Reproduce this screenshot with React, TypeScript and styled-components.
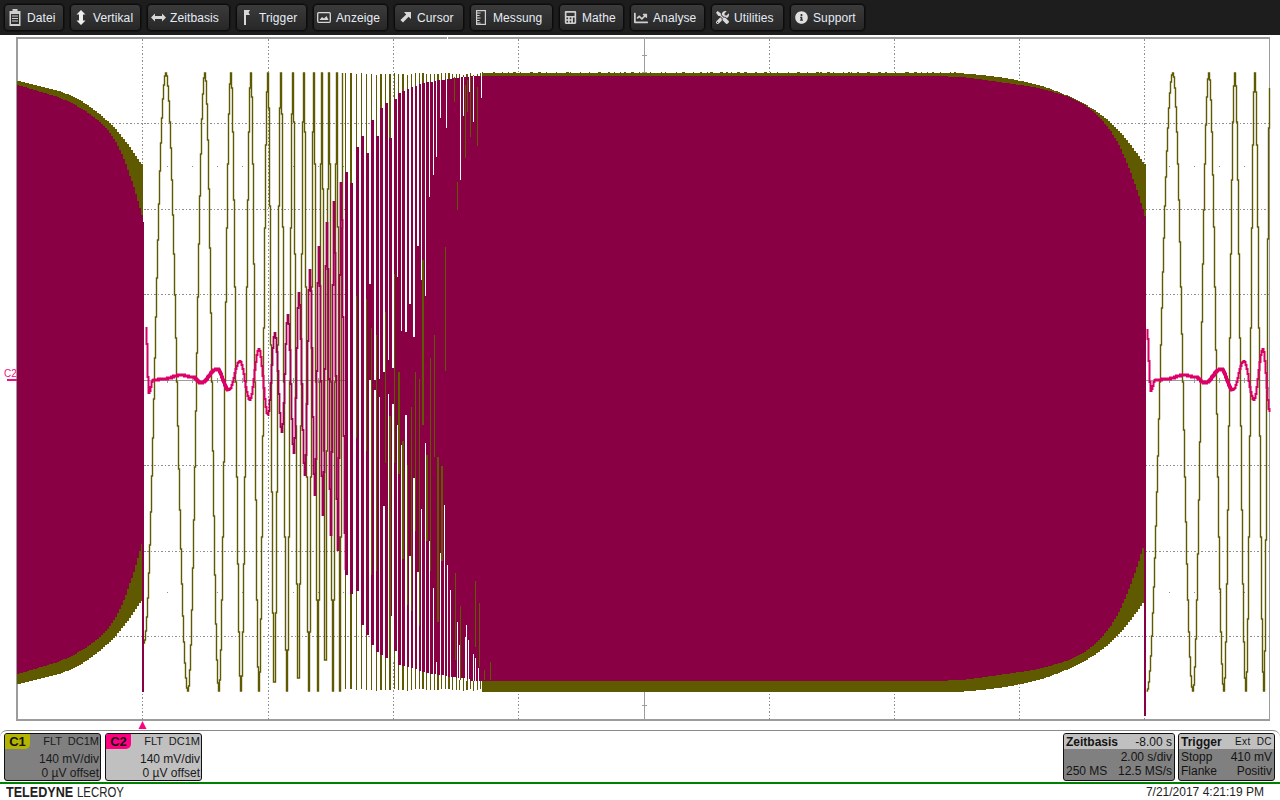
import { ReactNode } from "react";
import styled, { createGlobalStyle } from "styled-components";
import { FaTools, FaInfoCircle, FaCalculator, FaChartLine } from "react-icons/fa";

const GlobalStyle = createGlobalStyle`
  html, body {
    margin: 0;
    padding: 0;
    background: #fff;
    font-family: "Liberation Sans", Arial, sans-serif;
  }
`;

const Screen = styled.div`
  width: 1280px;
  height: 800px;
  display: flex;
  flex-direction: column;
  overflow: hidden;
  background: #fff;
`;

const Toolbar = styled.div`
  height: 35px;
  flex: none;
  box-sizing: border-box;
  display: flex;
  align-items: flex-start;
  gap: 6px;
  padding: 4px 0 0 4px;
  background: #1d1d1d;
`;

const MenuButton = styled.div<{ $w: number }>`
  width: ${(p) => p.$w}px;
  height: 27px;
  box-sizing: border-box;
  display: flex;
  align-items: center;
  border-radius: 4px;
  border: 1px solid #0c0c0c;
  outline: 1px solid #141414;
  background: linear-gradient(#3b3b3b, #272727);
  color: #e6ecf6;
  font-size: 12px;
  letter-spacing: 0.1px;
  white-space: nowrap;
`;

const IconSlot = styled.span`
  width: 20px;
  padding-right: 2px;
  flex: none;
  display: flex;
  justify-content: center;
  svg {
    display: block;
  }
`;

const ScopeArea = styled.div`
  position: relative;
  height: 695px;
  flex: none;
`;

const Traces = styled.svg`
  display: block;
`;

const OffsetLabel = styled.div`
  position: absolute;
  left: 4px;
  top: 333px;
  font-size: 10px;
  line-height: 11px;
  color: #f0107c;
  &::after {
    content: "";
    position: absolute;
    left: 3px;
    top: 11px;
    width: 10px;
    height: 2px;
    background: #f0107c;
  }
`;

const DescriptorBar = styled.div`
  height: 52px;
  flex: none;
  box-sizing: border-box;
  display: flex;
  justify-content: space-between;
  padding: 2px 5px 0 4px;
  border-top: 1px solid #8a8a8a;
  border-radius: 7px 7px 0 0;
`;

const CardGroup = styled.div<{ $gap: number }>`
  display: flex;
  gap: ${(p) => p.$gap}px;
`;

const ChannelCard = styled.div<{ $shade: string }>`
  width: 97px;
  height: 48px;
  box-sizing: border-box;
  border: 1px solid #111;
  border-radius: 3px;
  background: ${(p) => p.$shade};
  color: #1a1a1a;
  font-size: 12px;
  line-height: 13px;
  text-align: right;
  overflow: hidden;
`;

const ChannelHead = styled.div`
  display: flex;
  justify-content: space-between;
  height: 18px;
  font-size: 11px;
  line-height: 14px;
  padding-right: 1px;
  word-spacing: 3px;
`;

const ChannelBadge = styled.span<{ $color: string }>`
  width: 25px;
  height: 15px;
  background: ${(p) => p.$color};
  border-radius: 0 0 5px 0;
  font-size: 13px;
  font-weight: bold;
  line-height: 15px;
  text-align: center;
  color: #111;
`;

const CardLine = styled.div`
  height: 14px;
  line-height: 14px;
  padding-right: 1px;
  white-space: nowrap;
`;

const InfoCard = styled.div<{ $w: number }>`
  width: ${(p) => p.$w}px;
  height: 48px;
  box-sizing: border-box;
  border: 1px solid #111;
  border-radius: 3px;
  background: #808080;
  color: #141414;
  font-size: 12px;
  overflow: hidden;
`;

const InfoHead = styled.div`
  height: 15px;
  display: flex;
  justify-content: space-between;
  align-items: center;
  padding: 0 2px;
  background: #c0c0c0;
`;

const InfoRow = styled.div`
  height: 14px;
  margin-top: 1px;
  line-height: 14px;
  display: flex;
  justify-content: space-between;
  padding: 0 2px;
  white-space: nowrap;
  & + & {
    margin-top: 0;
  }
`;

const SmallTags = styled.span`
  font-size: 10px;
  letter-spacing: 0.4px;
  word-spacing: 3px;
`;

const Footer = styled.div`
  flex: 1;
  display: flex;
  align-items: center;
  justify-content: space-between;
  box-sizing: border-box;
  padding: 0 16px 0 6px;
  border-top: 2px solid #008000;
`;

const Logo = styled.div`
  display: flex;
  font-size: 15px;
  line-height: 16px;
  color: #222;
`;

const LogoPart = styled.span<{ $w: number; $scale: number }>`
  display: inline-block;
  width: ${(p) => p.$w}px;
  transform: scaleX(${(p) => p.$scale});
  transform-origin: left center;
  white-space: nowrap;
`;

const Stamp = styled.div`
  font-size: 12px;
  color: #222;
`;

const OLIVE = "#5f5a00";
const MAROON = "#8a0044";

const ClipboardIcon = () => (
  <svg width="12" height="17" viewBox="0 0 12 17" fill="#cfcfcf">
    <path d="M3.5 0h5v2h3v15H.5V2h3zM2 5v10h8V5z" fillRule="evenodd" />
    <path d="M3 6.5h6v1H3zM3 9h6v1H3zM3 11.5h6v1H3z" />
  </svg>
);

const UpDownIcon = () => (
  <svg width="10" height="15" viewBox="0 0 10 15" fill="#eeeeee">
    <path d="M5 0l4.5 4.5H7v6h2.5L5 15 .5 10.5H3v-6H.5z" />
  </svg>
);

const LeftRightIcon = () => (
  <svg width="15" height="9" viewBox="0 0 15 9" fill="#d8d8d8">
    <path d="M0 4.5L4 .5V3h7V.5l4 4-4 4V6H4v2.5z" />
  </svg>
);

const FlagIcon = () => (
  <svg width="7" height="15" viewBox="0 0 7 15" fill="#d8d8d8">
    <path d="M0 0h2v15H0zM2 0h4L4.6 2.5 6 5H2z" />
  </svg>
);

const DisplayIcon = () => (
  <svg width="14" height="11" viewBox="0 0 14 11" fill="none" stroke="#d8d8d8" strokeWidth="1.3">
    <rect x=".7" y=".7" width="12.6" height="9.6" rx="1" />
    <path d="M2.5 8l2.5-3 2 1.5L9.5 4l2 4z" fill="#d8d8d8" stroke="none" />
  </svg>
);

const CursorIcon = () => (
  <svg width="11" height="11" viewBox="0 0 11 11" fill="#d8d8d8">
    <path d="M11 0v7L8.6 4.8 3 10.6.4 8l5.8-5.6L4 0z" />
  </svg>
);

const RulerIcon = () => (
  <svg width="10" height="15" viewBox="0 0 10 15" fill="none" stroke="#d0d0d0" strokeWidth="1.2">
    <rect x=".6" y=".6" width="8.8" height="13.8" />
    <path d="M.6 3h4M.6 5.5h3M.6 8h4M.6 10.5h3M.6 13h4" strokeWidth="1" />
  </svg>
);

const menu: { label: string; w: number; icon: ReactNode }[] = [
  { label: "Datei", w: 60, icon: <ClipboardIcon /> },
  { label: "Vertikal", w: 71, icon: <UpDownIcon /> },
  { label: "Zeitbasis", w: 83, icon: <LeftRightIcon /> },
  { label: "Trigger", w: 71, icon: <FlagIcon /> },
  { label: "Anzeige", w: 75, icon: <DisplayIcon /> },
  { label: "Cursor", w: 70, icon: <CursorIcon /> },
  { label: "Messung", w: 83, icon: <RulerIcon /> },
  { label: "Mathe", w: 65, icon: <FaCalculator size={13} color="#cfcfcf" /> },
  { label: "Analyse", w: 75, icon: <FaChartLine size={14} color="#cfcfcf" /> },
  { label: "Utilities", w: 73, icon: <FaTools size={13} color="#d8d8d8" /> },
  { label: "Support", w: 75, icon: <FaInfoCircle size={13} color="#e0e0e0" /> },
];

type Table = [number, number][];

const lerp = (t: Table, x: number) => {
  if (x <= t[0][0]) return t[0][1];
  for (let i = 1; i < t.length; i++) {
    if (x <= t[i][0]) {
      const k = (x - t[i - 1][0]) / (t[i][0] - t[i - 1][0]);
      return t[i - 1][1] + k * (t[i][1] - t[i - 1][1]);
    }
  }
  return t[t.length - 1][1];
};

// rounds off the knees of a table, less so close to its ends
const smooth = (t: Table, x: number) => {
  const r = Math.max(0, Math.min(14, x - t[0][0], t[t.length - 1][0] - x));
  let sum = 0;
  for (let i = -4; i <= 4; i++) sum += lerp(t, x + (i / 4) * r);
  return sum / 9;
};

// one pen stroke through peaks and troughs, stepped per pixel column like the scope draws it
const stepped = (pts: Table) => {
  let d = `M${pts[0][0] + 0.5} ${pts[0][1]}`;
  for (let i = 1; i < pts.length; i++) {
    const [x0, y0] = pts[i - 1];
    const [x1, y1] = pts[i];
    for (let x = Math.floor(x0) + 1; x <= x1; x++) {
      const k = (x - x0) / (x1 - x0);
      const y = y0 + ((1 - Math.cos(Math.PI * k)) / 2) * (y1 - y0);
      d += `H${x + 0.5}V${Math.round(y)}`;
    }
  }
  return d;
};

const box = (x: number, y: number, w: number, h: number) =>
  `M${x.toFixed(1)} ${y.toFixed(1)}h${w.toFixed(1)}v${h.toFixed(1)}h${(-w).toFixed(1)}z`;

const alternate = (xs: number[], first: number, second: number): Table =>
  xs.map((x, i) => [x, i % 2 === 0 ? first : second]);

const oliveLeft: Table = [
  [143, 643],
  ...alternate(
    [165, 187, 204, 218, 230, 240, 250, 258, 267, 273.5, 280, 286, 292, 297.5, 303, 308, 313, 317, 321, 324.5, 328, 332, 336, 339, 342],
    73,
    691
  ),
];

const oliveRight: Table = [
  [1146, 691],
  ...alternate([1172, 1192, 1208, 1223, 1234, 1245, 1254, 1263], 73, 691),
  [1269, 88],
];

const pinkFlatLeft: Table = [
  [152, 380], [163, 379], [180, 375], [192, 377], [200, 383], [216, 369], [228, 390],
];

const pinkLeft: Table = [
  [145, 328], [148, 393], [152, 380], [163, 379], [180, 375], [192, 377], [200, 383],
  [216, 369], [228, 390], [239, 361], [249, 400], [258, 349], [267, 415],
];

const maroonLeft: Table = [
  [267, 415], [274, 333], [281, 432], [287, 315], [293, 453], [298, 293], [304, 475], [309, 270],
  [314, 495], [318, 247], [322, 515], [326, 223], [330, 535], [333, 202], [337, 550], [340, 183], [345, 570],
];

const pinkFlatRight: Table = [
  [1154, 380], [1166, 379], [1183, 375], [1195, 377], [1204, 383], [1220, 369], [1232, 390],
];

const pinkRight: Table = [
  [1146, 330], [1150, 391], [1154, 380], [1166, 379], [1183, 375], [1195, 377], [1204, 383],
  [1220, 369], [1232, 390], [1243, 361], [1253, 400], [1262, 349], [1269, 412],
];

const periods: Table = [[345, 5.4], [380, 4.6], [420, 3.8], [482, 3.4]];
const slitWidth: Table = [[345, 2.4], [380, 1.7], [410, 1.2], [445, 1]];
const solidMiddle: Table = [[345, 0], [375, 0], [400, 50], [425, 130], [445, 230]];
const bandTop: Table = [[345, 172], [350, 160], [360, 137], [373, 117], [390, 97], [420, 83], [440, 80], [460, 77], [482, 76]];
const bandBottom: Table = [[345, 575], [350, 593], [360, 623], [373, 650], [393, 663], [427, 673], [450, 677], [482, 680]];

const oliveHalf: Table = [
  [17, 301], [70, 288], [100, 268], [125, 243], [135, 225], [143, 215],
];
const maroonHalf: Table = [
  [17, 294], [67, 279], [100, 258], [117, 239], [128, 211], [135, 186], [143, 156],
];
const oliveHalfRight: Table = [
  [470, 309], [960, 309], [1000, 305], [1040, 297], [1080, 281], [1107, 263], [1125, 245], [1138, 225], [1146, 215],
];
const maroonHalfRight: Table = [
  [470, 302], [960, 301.5], [1040, 290], [1080, 277], [1100, 261], [1120, 234], [1130, 208], [1138, 181], [1146, 156],
];

// hand picked slits and olive fragments from the end of the sweep
const lateSlits: number[][] = [
  [481, 76, 98], [473, 76, 122], [460, 76, 180], [469, 76, 92], [457, 622, 681], [475, 658, 681],
  [465, 637, 681], [468, 640, 681], [450, 590, 681], [478, 668, 681], [446, 76, 128],
];
const lateOlive: number[][] = [
  [455, 573, 660], [475, 581, 647], [479, 603, 667], [460, 606, 680], [465, 85, 158], [467, 80, 112],
  [470, 77, 137], [477, 87, 146], [454, 77, 102], [457, 182, 210], [484, 670, 680], [490, 662, 680],
];

const buildTraces = () => {
  let seed = 4711;
  const rnd = () => {
    seed = (seed * 16807) % 2147483647;
    return seed / 2147483647;
  };

  let oliveBars = "";
  let maroonBars = "";
  let slits = "";
  let oliveOver = "";

  let x = 345;
  while (x < 482) {
    const p = lerp(periods, x);
    const top = lerp(bandTop, x);
    const bottom = lerp(bandBottom, x);
    const slit = lerp(slitWidth, x);
    oliveBars += box(x, 73 + Math.round(rnd() * 2), 1.3, 616);
    if (x < 470) {
      const trimTop = x < 410 && rnd() < 0.4 ? rnd() * 70 : 0;
      const trimBottom = x < 410 && rnd() < 0.4 ? rnd() * 70 : 0;
      maroonBars += box(x, top + trimTop, p, bottom - top - trimTop - trimBottom);
    }
    if (x < 445) {
      // long slits from both band edges, the part left closed around the middle grows along the sweep
      const slitX = x + p - slit;
      const middle = lerp(solidMiddle, x);
      const upTo = 380 - middle * (0.4 + rnd()) - (rnd() < 0.2 ? rnd() * 120 : 0);
      const downFrom = 380 + middle * (0.4 + rnd()) + (rnd() < 0.2 ? rnd() * 120 : 0);
      slits += box(slitX, top, slit, upTo - top);
      slits += box(slitX, downFrom, slit, bottom - downFrom + 1);
      if (x > 352 && rnd() < lerp([[352, 0.45], [375, 0.85], [430, 0.8], [445, 0.4]], x)) {
        oliveOver += box(x, 220 + rnd() * 260, 1.5, 80 + rnd() * 170);
      }
    } else if (x < 480 && rnd() < 0.55) {
      // a few slits still cut in from the band edges
      const len = 12 + rnd() * 50;
      slits += rnd() < 0.4 ? box(x, top, 1, len) : box(x, bottom - len, 1, len + 2);
    }
    x += p;
  }

  lateSlits.forEach(([sx, a, b]) => {
    slits += box(sx, a, 1, b - a);
  });
  lateOlive.forEach(([sx, a, b]) => {
    oliveOver += box(sx, a, 1, b - a);
  });

  // filled sweep edges, a step every two columns
  const outline = (from: number, to: number, half: (x: number) => number, mid: number) => {
    let upper = "";
    let lower = "";
    for (let c = from; c <= to; c += 2) {
      const h = Math.round(half(c));
      upper += `L${c} ${mid - h}H${c + 2}`;
      lower = `L${c + 2} ${mid + h + 1}H${c}` + lower;
    }
    return `M${from} ${mid}` + upper + `V${mid}` + lower + "Z";
  };

  const oliveFill =
    outline(17, 141, (c) => smooth(oliveHalf, c), 382) +
    outline(482, 1144, (c) => smooth(oliveHalfRight, c), 382);
  const maroonFill =
    outline(17, 141, (c) => smooth(maroonHalf, c), 379) +
    outline(470, 1144, (c) => smooth(maroonHalfRight, c), 378);

  // olive plateau edge is noisy on the top
  let oliveNoise = "";
  for (let c = 482; c < 960; c += 3 + Math.floor(rnd() * 9)) {
    oliveNoise += box(c, 72, 1 + Math.floor(rnd() * 3), 2);
  }

  return { oliveBars, maroonBars, slits, oliveOver, oliveFill, maroonFill, oliveNoise };
};

const traces = buildTraces();

const gridXs = Array.from({ length: 11 }, (_, i) => 17 + 125.25 * i);
const gridYs = Array.from({ length: 7 }, (_, i) => 123 + 85.5 * i);
const tickXs = Array.from({ length: 49 }, (_, i) => 17 + 25.05 * (i + 1));
const tickYs = Array.from({ length: 39 }, (_, i) => 38 + 17.1 * (i + 1));

const ScopeTraces = () => (
  <Traces width="1280" height="695" viewBox="0 35 1280 695" shapeRendering="crispEdges">
    <rect x="17" y="38" width="1252.5" height="682" fill="none" stroke="#9c9c9c" strokeWidth="1.5" />
    <g stroke="#8f8f8f" strokeDasharray="1.5 2">
      {gridXs.slice(1, 10).filter((_, i) => i !== 4).map((gx) => (
        <line key={gx} x1={Math.round(gx)} y1="39" x2={Math.round(gx)} y2="720" />
      ))}
      {gridYs.filter((_, i) => i !== 3).map((gy) => (
        <line key={gy} x1="18" y1={Math.round(gy)} x2="1269" y2={Math.round(gy)} />
      ))}
    </g>
    <g stroke="#9c9c9c">
      <line x1="644" y1="38" x2="644" y2="720" />
      <line x1="17" y1="380" x2="1269" y2="380" />
      {tickXs.map((tx) => (
        <line key={tx} x1={Math.round(tx)} y1="378" x2={Math.round(tx)} y2="383" />
      ))}
      {tickYs.map((ty) => (
        <line key={ty} x1="642" y1={Math.round(ty)} x2="647" y2={Math.round(ty)} />
      ))}
    </g>
    <g fill="#8f8f8f">
      {tickXs.map((tx) => (
        <g key={tx}>
          <rect x={Math.round(tx)} y="166" width="1" height="1" />
          <rect x={Math.round(tx)} y="592" width="1" height="1" />
        </g>
      ))}
    </g>

    <path d={traces.oliveFill} fill={OLIVE} />
    <path d={traces.oliveNoise} fill={OLIVE} />
    <path d={traces.oliveBars} fill={OLIVE} />
    <g fill="none" stroke={OLIVE} strokeWidth="1.4" shapeRendering="auto">
      <path d={stepped(oliveLeft)} />
      <path d={stepped(oliveRight)} />
    </g>

    <path d={traces.maroonFill} fill={MAROON} />
    <path d={traces.maroonBars} fill={MAROON} />
    <path d={traces.slits} fill="#fff" />
    <path d={traces.oliveOver} fill={OLIVE} />
    <g fill="none" shapeRendering="auto">
      <path d={stepped(maroonLeft)} stroke="#a00050" strokeWidth="1.8" />
      <path d={stepped(pinkLeft)} stroke="#d80066" strokeWidth="2" />
      <path d={stepped(pinkRight)} stroke="#d80066" strokeWidth="2" />
      <path d={stepped(pinkFlatLeft)} stroke="#dc0068" strokeWidth="3" />
      <path d={stepped(pinkFlatRight)} stroke="#dc0068" strokeWidth="3" />
    </g>
    <rect x="142" y="222" width="1.5" height="470" fill={MAROON} />
    <rect x="1144" y="530" width="1.5" height="186" fill={MAROON} />
    <path d="M142.5 721l4 8h-8z" fill="#ff0080" shapeRendering="auto" />
  </Traces>
);

export default function App() {
  return (
    <Screen>
      <GlobalStyle />
      <Toolbar>
        {menu.map((item) => (
          <MenuButton key={item.label} $w={item.w}>
            <IconSlot>{item.icon}</IconSlot>
            {item.label}
          </MenuButton>
        ))}
      </Toolbar>
      <ScopeArea>
        <ScopeTraces />
        <OffsetLabel>C2</OffsetLabel>
      </ScopeArea>
      <DescriptorBar>
        <CardGroup $gap={4}>
          <ChannelCard $shade="#808080">
            <ChannelHead>
              <ChannelBadge $color="#b4b400">C1</ChannelBadge>
              <span>FLT DC1M</span>
            </ChannelHead>
            <CardLine>140 mV/div</CardLine>
            <CardLine>0 µV offset</CardLine>
          </ChannelCard>
          <ChannelCard $shade="#c0c0c0">
            <ChannelHead>
              <ChannelBadge $color="#ff0080">C2</ChannelBadge>
              <span>FLT DC1M</span>
            </ChannelHead>
            <CardLine>140 mV/div</CardLine>
            <CardLine>0 µV offset</CardLine>
          </ChannelCard>
        </CardGroup>
        <CardGroup $gap={3}>
          <InfoCard $w={112}>
            <InfoHead>
              <b>Zeitbasis</b>
              <span>-8.00 s</span>
            </InfoHead>
            <InfoRow>
              <span />
              <span>2.00 s/div</span>
            </InfoRow>
            <InfoRow>
              <span>250 MS</span>
              <span>12.5 MS/s</span>
            </InfoRow>
          </InfoCard>
          <InfoCard $w={97}>
            <InfoHead>
              <b>Trigger</b>
              <SmallTags>Ext DC</SmallTags>
            </InfoHead>
            <InfoRow>
              <span>Stopp</span>
              <span>410 mV</span>
            </InfoRow>
            <InfoRow>
              <span>Flanke</span>
              <span>Positiv</span>
            </InfoRow>
          </InfoCard>
        </CardGroup>
      </DescriptorBar>
      <Footer>
        <Logo>
          <LogoPart $w={71} $scale={0.84}>
            <b>TELEDYNE</b>
          </LogoPart>
          <LogoPart $w={46} $scale={0.76}>
            LECROY
          </LogoPart>
        </Logo>
        <Stamp>7/21/2017 4:21:19 PM</Stamp>
      </Footer>
    </Screen>
  );
}
